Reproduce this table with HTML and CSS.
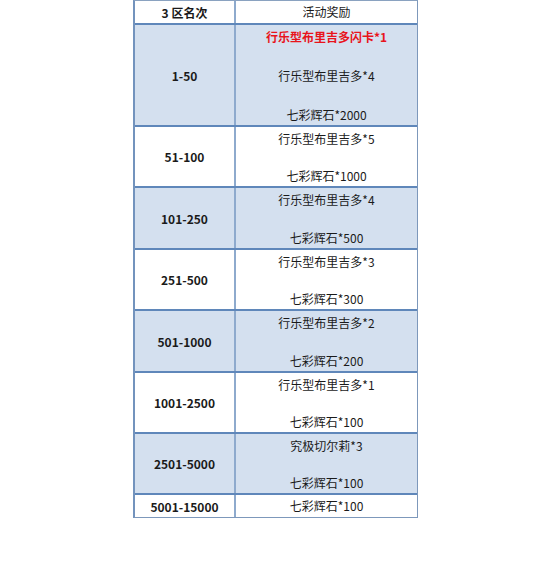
FILE: index.html
```html
<!DOCTYPE html>
<html lang="zh">
<head>
<meta charset="utf-8">
<link rel="stylesheet" href="styles.css">
</head>
<body>
<div class="table">
  <div class="row head">
    <div class="c1">3 区名次</div>
    <div class="c2">活动奖励</div>
  </div>
  <div class="row blue h102">
    <div class="c1">1-50</div>
    <div class="c2"><span class="red">行乐型布里吉多闪卡*1</span><span>行乐型布里吉多*4</span><span>七彩辉石*2000</span></div>
  </div>
  <div class="row h61">
    <div class="c1">51-100</div>
    <div class="c2"><span>行乐型布里吉多*5</span><span>七彩辉石*1000</span></div>
  </div>
  <div class="row blue h62">
    <div class="c1">101-250</div>
    <div class="c2"><span>行乐型布里吉多*4</span><span>七彩辉石*500</span></div>
  </div>
  <div class="row h61">
    <div class="c1">251-500</div>
    <div class="c2"><span>行乐型布里吉多*3</span><span>七彩辉石*300</span></div>
  </div>
  <div class="row blue h62">
    <div class="c1">501-1000</div>
    <div class="c2"><span>行乐型布里吉多*2</span><span>七彩辉石*200</span></div>
  </div>
  <div class="row h61">
    <div class="c1">1001-2500</div>
    <div class="c2"><span>行乐型布里吉多*1</span><span>七彩辉石*100</span></div>
  </div>
  <div class="row blue h61">
    <div class="c1">2501-5000</div>
    <div class="c2"><span>究极切尔莉*3</span><span>七彩辉石*100</span></div>
  </div>
  <div class="row last h23">
    <div class="c1">5001-15000</div>
    <div class="c2 single"><span>七彩辉石*100</span></div>
  </div>
</div>
</body>
</html>
```
FILE: styles.css
```css
html, body {
  margin: 0;
  padding: 0;
  background: #ffffff;
}
body {
  font-family: "Noto Sans CJK SC", "Noto Sans", sans-serif;
  font-size: 12px;
  color: #1a1a1a;
}
.table {
  margin-left: 133px;
  width: 285px;
  box-sizing: border-box;
  border-left: 2px solid #7393bd;
  border-right: 1px solid #7d98bb;
  border-bottom: 1px solid #7d98bb;
  border-top: 1px solid #8aa2c0;
}
.row {
  display: flex;
  box-sizing: border-box;
  border-bottom: 2px solid #5f87ba;
  background: #ffffff;
}
.row.blue {
  background: #d4e0ef;
}
.row.last {
  border-bottom: none;
}
.head {
  height: 24px;
}
.h102 { height: 102px; }
.h61 { height: 61px; }
.h62 { height: 62px; }
.h23 { height: 22px; }
.c1 {
  width: 99px;
  border-right: 2px solid #8eaacd;
  display: flex;
  align-items: center;
  justify-content: center;
  font-weight: bold;
}
.c2 {
  flex: 1;
  display: flex;
  flex-direction: column;
  justify-content: space-between;
  align-items: center;
  padding: 3px 0 1px;
  line-height: 18px;
}
.head .c2, .c2.single {
  justify-content: center;
  padding: 0;
}
.head .c2 {
  font-weight: normal;
}
.red {
  color: #e8141c;
  font-weight: bold;
}
```
